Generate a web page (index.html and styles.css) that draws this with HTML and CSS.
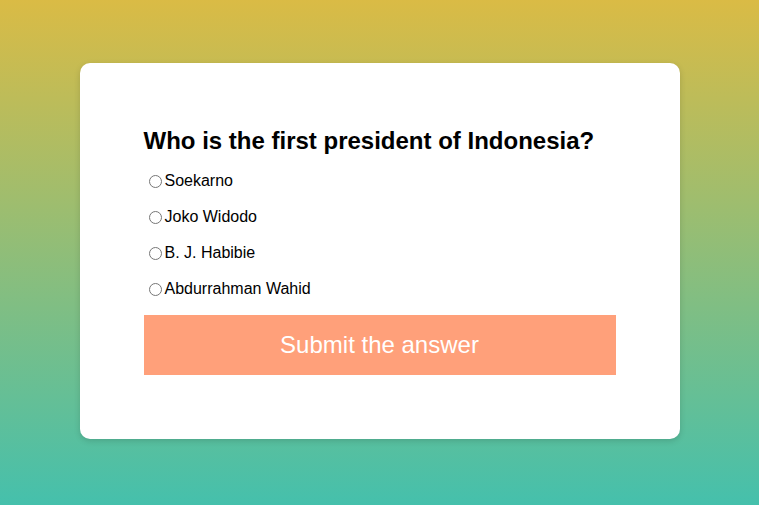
FILE: index.html
```html
<!DOCTYPE html>
<html>
<head>
<meta charset="utf-8">
<link rel="stylesheet" href="styles.css">
</head>
<body>
<div class="page">
  <div class="card">
    <h2 class="question">Who is the first president of Indonesia?</h2>
    <div class="options">
      <label class="option"><input type="radio" name="answer">Soekarno</label>
      <label class="option"><input type="radio" name="answer">Joko Widodo</label>
      <label class="option"><input type="radio" name="answer">B. J. Habibie</label>
      <label class="option"><input type="radio" name="answer">Abdurrahman Wahid</label>
    </div>
    <button class="submit">Submit the answer</button>
  </div>
</div>
</body>
</html>
```
FILE: styles.css
```css
html, body {
  margin: 0;
  padding: 0;
  height: 100%;
}
body {
  font-family: "Liberation Sans", Arial, sans-serif;
  background: linear-gradient(to bottom, #dabb45 0%, #45c0ac 100%);
}
.page {
  height: 505px;
  box-sizing: border-box;
  padding-top: 63px;
  display: flex;
  justify-content: center;
  align-items: flex-start;
}
.card {
  width: 600px;
  height: 376px;
  box-sizing: border-box;
  background: #fff;
  border-radius: 10px;
  box-shadow: 0 2px 6px rgba(0, 0, 0, 0.15);
  padding: 64px 64px;
  display: flex;
  flex-direction: column;
}
.question {
  margin: 0;
  font-size: 24px;
  line-height: 28px;
  font-weight: bold;
  color: #000;
}
.options {
  margin-top: 17px;
  display: flex;
  flex-direction: column;
  gap: 18px;
}
.option {
  display: flex;
  align-items: center;
  height: 18px;
  font-size: 16px;
  line-height: 18px;
  color: #000;
}
.option input {
  margin: 0 3px 0 5px;
  width: 13px;
  height: 13px;
}
.submit {
  margin-top: 17px;
  height: 60px;
  width: 100%;
  border: none;
  background: #ffa07a;
  color: #fff;
  font-family: "Liberation Sans", Arial, sans-serif;
  font-size: 24px;
  padding: 0;
}
```
